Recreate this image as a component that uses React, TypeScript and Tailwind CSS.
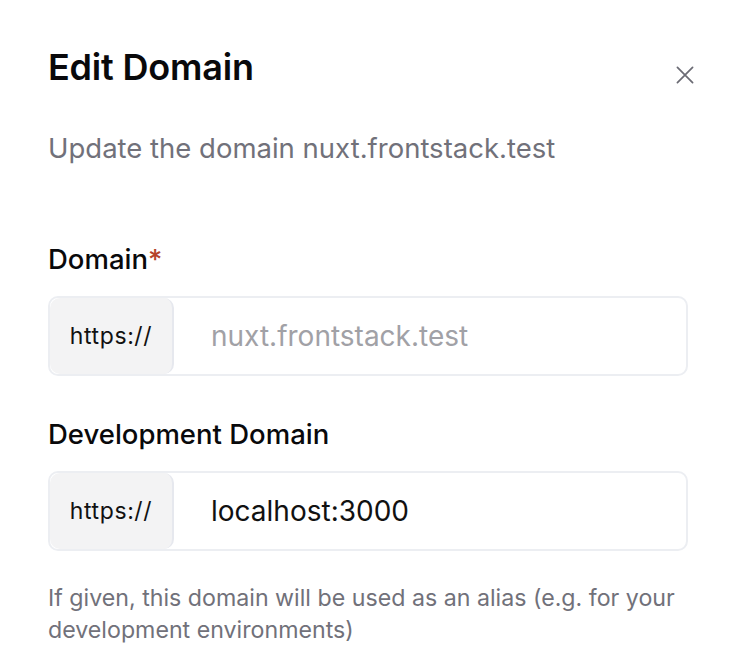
import React, { useState } from 'react';

const CloseIcon: React.FC<{ className?: string }> = ({ className }) => (
    <svg viewBox="0 0 24 24" fill="none" stroke="currentColor" strokeWidth={1.6} strokeLinecap="round" className={className}>
        <path d="M5 5l14 14M19 5L5 19" />
    </svg>
);

const PrefixInput: React.FC<{ value: string; placeholder?: string; onChange: (v: string) => void }> = ({ value, placeholder, onChange }) => (
    <div className="flex h-[80px] rounded-[10px] border-2 border-[#eceef2] bg-white overflow-hidden">
        <div className="flex w-[124px] shrink-0 items-center justify-center rounded-[10px] border-r-2 border-[#e6e8ee] bg-[#f3f3f4] text-[23px] tracking-[0.6px] text-[#111111]">
            https://
        </div>
        <input
            value={value}
            placeholder={placeholder}
            onChange={(e) => onChange(e.target.value)}
            className="min-w-0 flex-1 bg-transparent pl-[37px] text-[28px] text-[#111111] outline-none placeholder:text-[#a1a1a6]"
        />
    </div>
);

const App: React.FC = () => {
    const [domain, setDomain] = useState('');
    const [devDomain, setDevDomain] = useState('localhost:3000');

    return (
        <div className="min-h-screen bg-white font-['Inter',sans-serif] px-[48px] pt-[44px]">
            <div className="flex items-start justify-between">
                <h1 className="text-[36px] leading-[46px] font-semibold text-[#09090b] tracking-[-0.2px]">Edit Domain</h1>
                <button className="mr-[-10px] mt-[18px] text-[#6b6b74]">
                    <CloseIcon className="h-[26px] w-[26px]" />
                </button>
            </div>
            <p className="mt-[40px] text-[27.5px] leading-[36px] text-[#71717a]">Update the domain nuxt.frontstack.test</p>

            <div className="mt-[75px]">
                <label className="block text-[27.5px] leading-[36px] font-medium text-[#09090b]">
                    Domain<span className="text-[#b5432b]">*</span>
                </label>
                <div className="mt-[19px]">
                    <PrefixInput value={domain} placeholder="nuxt.frontstack.test" onChange={setDomain} />
                </div>
            </div>

            <div className="mt-[40px]">
                <label className="block text-[27.5px] leading-[36px] font-medium text-[#09090b]">Development Domain</label>
                <div className="mt-[19px]">
                    <PrefixInput value={devDomain} onChange={setDevDomain} />
                </div>
                <p className="mt-[31px] text-[23.2px] leading-[32px] text-[#71717a]">
                    If given, this domain will be used as an alias (e.g. for your development environments)
                </p>
            </div>
        </div>
    );
};

export default App;
